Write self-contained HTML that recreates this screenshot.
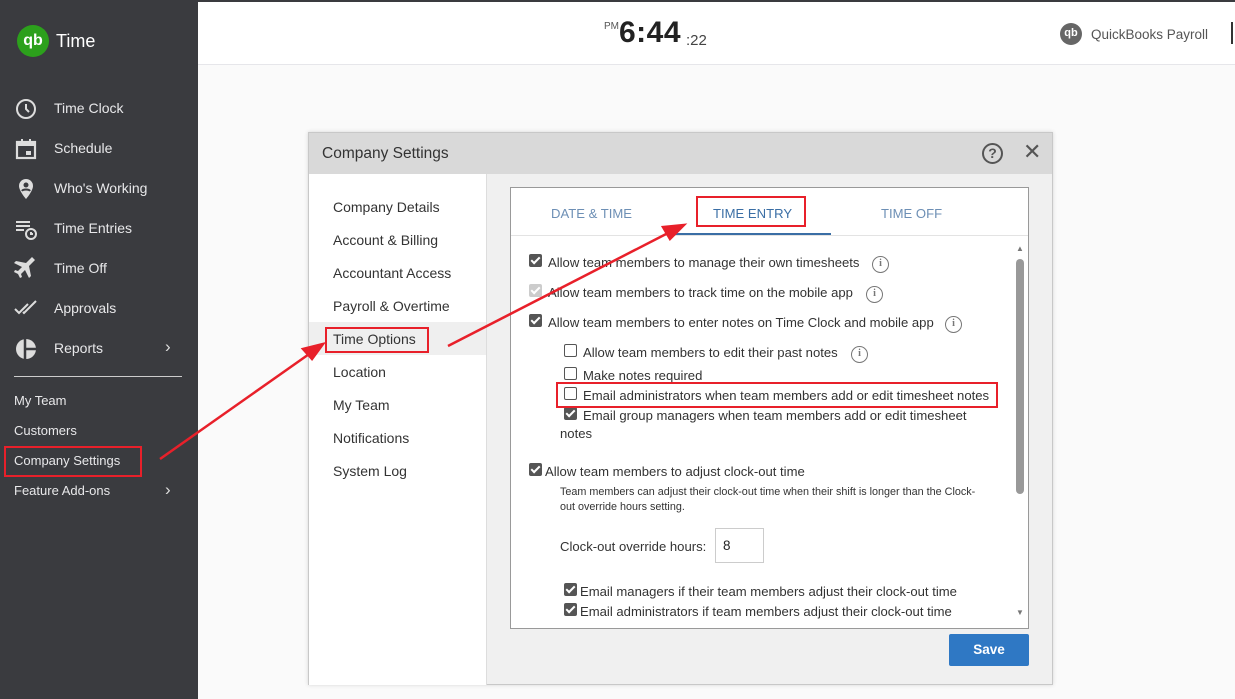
<!DOCTYPE html>
<html><head><meta charset="utf-8"><style>
*{box-sizing:border-box;margin:0;padding:0}
body{width:1235px;height:699px;position:relative;overflow:hidden;background:#fafafa;font-family:"Liberation Sans",sans-serif;color:#333}
.abs{position:absolute}
#side{left:0;top:0;width:198px;height:699px;background:#3a3b3f;color:#e8e8ea}
.nav{position:absolute;left:54px;font-size:14px;color:#e8e8ea}
.ic{position:absolute;left:14px}
.low{position:absolute;left:14px;font-size:13px;color:#e8e8ea}
#top{left:198px;top:0;width:1037px;height:65px;background:#fff;border-top:2px solid #3a3b3f;border-bottom:1px solid #e6e6ea}
#modal{left:308px;top:132px;width:745px;height:553px;background:#f0f0f0;border:1px solid #c8c8c8;box-shadow:0 0 4px rgba(0,0,0,.15)}
#mh{left:0;top:0;width:743px;height:41px;background:#d9d9d9}
#ln{left:0;top:41px;width:178px;height:511px;background:#fff;border-right:1px solid #ddd}
.li{position:absolute;left:24px;font-size:14px;color:#333}
#box{left:201px;top:54px;width:519px;height:442px;background:#fff;border:1px solid #999}
.t{position:absolute;font-size:13.1px;color:#333;white-space:nowrap}
.cb{position:absolute;width:13px;height:13px;border-radius:2px}
.on{background:#555}
.on::after{content:"";position:absolute;left:4px;top:1px;width:3px;height:7px;border:solid #fff;border-width:0 2px 2px 0;transform:rotate(45deg)}
.off{border:1px solid #555;background:#fff}
.info{position:absolute;width:17px;height:17px;border:1.5px solid #777;border-radius:50%;font:bold 10px "Liberation Serif",serif;color:#777;text-align:center;line-height:14px}
.red{position:absolute;border:2.5px solid #e8202a}
</style></head><body>
<div id="side" class="abs">
 <div class="abs" style="left:17px;top:25px;width:32px;height:32px;border-radius:50%;background:#2ca01c;color:#fff;font:bold 16px 'Liberation Sans',sans-serif;text-align:center;line-height:31px">qb</div>
 <div class="abs" style="left:56px;top:31px;font-size:18px;color:#fff">Time</div>
 <svg class="ic" style="top:97px" width="24" height="24" viewBox="0 0 24 24" fill="none" stroke="#ddd" stroke-width="2"><circle cx="12" cy="12" r="9"/><path d="M12 7v5l3 3"/></svg>
 <div class="nav" style="top:100px">Time Clock</div>
 <svg class="ic" style="top:137px" width="24" height="24" viewBox="0 0 24 24"><rect x="3" y="5" width="18" height="16" fill="none" stroke="#ddd" stroke-width="2.2"/><rect x="3" y="5" width="18" height="4" fill="#ddd"/><rect x="7" y="2" width="2" height="4" fill="#ddd"/><rect x="15" y="2" width="2" height="4" fill="#ddd"/><rect x="12" y="14" width="5" height="4" fill="#ddd"/></svg>
 <div class="nav" style="top:140px">Schedule</div>
 <svg class="ic" style="top:177px" width="24" height="24" viewBox="0 0 24 24"><path d="M12 2a7 7 0 0 0-7 7c0 5 7 13 7 13s7-8 7-13a7 7 0 0 0-7-7z" fill="#ddd"/><circle cx="12" cy="8" r="2.5" fill="#3a3b3f"/><path d="M8 14c1-2 7-2 8 0" stroke="#3a3b3f" stroke-width="2" fill="none"/></svg>
 <div class="nav" style="top:180px">Who's Working</div>
 <svg class="ic" style="top:217px" width="24" height="24" viewBox="0 0 24 24" stroke="#ddd" stroke-width="2" fill="none"><path d="M2 5h14M2 9h14M2 13h8"/><circle cx="17" cy="17" r="5"/><path d="M17 15v2h2"/></svg>
 <div class="nav" style="top:220px">Time Entries</div>
 <svg class="ic" style="top:257px" width="24" height="24" viewBox="0 0 24 24"><path d="M21 3l-6 6 2 10-2 2-4-8-4 4 1 3-2 1-2-4-4-2 1-2 3 1 4-4-8-4 2-2 10 2 6-6z" fill="#ddd"/></svg>
 <div class="nav" style="top:260px">Time Off</div>
 <svg class="ic" style="top:297px" width="26" height="24" viewBox="0 0 26 24" stroke="#ddd" stroke-width="2" fill="none"><path d="M1 12l4 4 9-9M9 15l1 1 12-12"/></svg>
 <div class="nav" style="top:300px">Approvals</div>
 <svg class="ic" style="top:337px" width="24" height="24" viewBox="0 0 24 24"><circle cx="12" cy="12" r="10" fill="#ddd"/><path d="M11 1v22M11 12h12" stroke="#3a3b3f" stroke-width="2.5"/></svg>
 <div class="nav" style="top:340px">Reports</div>
 <div class="abs" style="left:165px;top:337px;font-size:17px;color:#ddd">›</div>
 <div class="abs" style="left:14px;top:376px;width:168px;height:1px;background:#ccc"></div>
 <div class="low" style="top:393px">My Team</div>
 <div class="low" style="top:423px">Customers</div>
 <div class="low" style="top:453px">Company Settings</div>
 <div class="low" style="top:483px">Feature Add-ons</div>
 <div class="abs" style="left:165px;top:480px;font-size:17px;color:#ddd">›</div>
</div>
<div id="top" class="abs">
 <div class="abs" style="left:406px;top:19px;font-size:10px;color:#555">PM</div>
 <div class="abs" style="left:421px;top:14px;font:bold 30px 'Liberation Sans',sans-serif;color:#222;letter-spacing:0.5px">6:44</div>
 <div class="abs" style="left:488px;top:30px;font-size:15px;color:#444">:22</div>
 <div class="abs" style="left:862px;top:21px;width:22px;height:22px;border-radius:50%;background:#666;color:#fff;font:bold 11px 'Liberation Sans',sans-serif;text-align:center;line-height:21px">qb</div>
 <div class="abs" style="left:893px;top:25px;font-size:13.5px;color:#555">QuickBooks Payroll</div>
 <div class="abs" style="left:1033px;top:20px;width:2px;height:22px;background:#333"></div>
</div>
<div id="modal" class="abs">
 <div id="mh" class="abs"><div class="abs" style="left:13px;top:12px;font-size:15.5px;color:#333">Company Settings</div>
  <div class="abs" style="left:673px;top:10px;width:21px;height:21px;border:2px solid #555;border-radius:50%;text-align:center;font:bold 14px 'Liberation Sans',sans-serif;color:#555;line-height:17px">?</div>
  <div class="abs" style="left:714px;top:6px;font-size:22px;color:#555">✕</div></div>
 <div id="ln" class="abs">
  <div class="li" style="top:25px">Company Details</div>
  <div class="li" style="top:58px">Account &amp; Billing</div>
  <div class="li" style="top:91px">Accountant Access</div>
  <div class="li" style="top:124px">Payroll &amp; Overtime</div>
  <div class="abs" style="left:0;top:148px;width:177px;height:33px;background:#efefef"></div>
  <div class="li" style="top:157px">Time Options</div>
  <div class="li" style="top:190px">Location</div>
  <div class="li" style="top:223px">My Team</div>
  <div class="li" style="top:256px">Notifications</div>
  <div class="li" style="top:289px">System Log</div>
 </div>
 <div id="box" class="abs">
  <div class="t" style="left:40px;top:18px;color:#6d8fb5">DATE &amp; TIME</div>
  <div class="t" style="left:202px;top:18px;color:#3a6ea5">TIME ENTRY</div>
  <div class="t" style="left:370px;top:18px;color:#6d8fb5">TIME OFF</div>
  <div class="abs" style="left:163px;top:45px;width:157px;height:2px;background:#3a6ea5"></div>
  <div class="abs" style="left:0;top:47px;width:517px;height:1px;background:#e3e3e3"></div>
  <div class="abs" style="left:505px;top:56px;font-size:8px;color:#777">▲</div>
  <div class="abs" style="left:505px;top:71px;width:8px;height:235px;background:#999;border-radius:4px"></div>
  <div class="abs" style="left:505px;top:420px;font-size:8px;color:#777">▼</div>
  <div class="cb on" style="left:18px;top:66px"></div><div class="t" style="left:37px;top:67px">Allow team members to manage their own timesheets</div><div class="info" style="left:361px;top:68px">i</div>
  <div class="cb on" style="left:18px;top:96px;background:#ccc"></div><div class="t" style="left:37px;top:97px">Allow team members to track time on the mobile app</div><div class="info" style="left:355px;top:98px">i</div>
  <div class="cb on" style="left:18px;top:126px"></div><div class="t" style="left:37px;top:127px">Allow team members to enter notes on Time Clock and mobile app</div><div class="info" style="left:434px;top:128px">i</div>
  <div class="cb off" style="left:53px;top:156px"></div><div class="t" style="left:72px;top:157px">Allow team members to edit their past notes</div><div class="info" style="left:340px;top:158px">i</div>
  <div class="cb off" style="left:53px;top:179px"></div><div class="t" style="left:72px;top:180px">Make notes required</div>
  <div class="cb off" style="left:53px;top:199px"></div><div class="t" style="left:72px;top:200px">Email administrators when team members add or edit timesheet notes</div>
  <div class="cb on" style="left:53px;top:219px"></div><div class="t" style="left:72px;top:220px">Email group managers when team members add or edit timesheet</div>
  <div class="t" style="left:49px;top:238px">notes</div>
  <div class="cb on" style="left:18px;top:275px"></div><div class="t" style="left:34px;top:276px">Allow team members to adjust clock-out time</div>
  <div class="t" style="left:49px;top:298px;font-size:10.8px">Team members can adjust their clock-out time when their shift is longer than the Clock-</div>
  <div class="t" style="left:49px;top:313px;font-size:10.8px">out override hours setting.</div>
  <div class="t" style="left:49px;top:351px">Clock-out override hours:</div>
  <div class="abs" style="left:204px;top:340px;width:49px;height:35px;border:1px solid #ccc;padding:9px 7px;font-size:13.5px;color:#222">8</div>
  <div class="cb on" style="left:53px;top:395px"></div><div class="t" style="left:69px;top:396px">Email managers if their team members adjust their clock-out time</div>
  <div class="cb on" style="left:53px;top:415px"></div><div class="t" style="left:69px;top:416px">Email administrators if team members adjust their clock-out time</div>
 </div>
 <div class="abs" style="left:640px;top:501px;width:80px;height:32px;background:#2f78c4;border-radius:2px;color:#fff;font-weight:bold;font-size:13.5px;text-align:center;line-height:32px">Save</div>
</div>
<div class="red" style="left:4px;top:446px;width:138px;height:31px"></div>
<div class="red" style="left:325px;top:327px;width:104px;height:26px"></div>
<div class="red" style="left:696px;top:196px;width:110px;height:31px"></div>
<div class="red" style="left:556px;top:382px;width:442px;height:26px"></div>
<svg class="abs" style="left:0;top:0" width="1235" height="699">
 <g stroke="#e8202a" stroke-width="2.5" fill="#e8202a">
 <line x1="160" y1="459" x2="312" y2="352"/><polygon points="323,344 303,349 312,359" />
 <line x1="448" y1="346" x2="670" y2="232"/><polygon points="684,225 663,227 670,239"/>
 </g>
</svg>
</body></html>
